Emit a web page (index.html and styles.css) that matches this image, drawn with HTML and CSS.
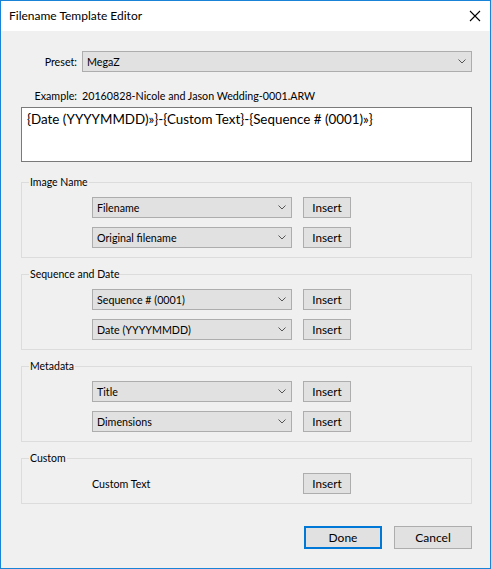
FILE: index.html
```html
<!DOCTYPE html>
<html lang="en">

<head>
    <meta charset="UTF-8">
    <title>Filename Template Editor</title>
    <link rel="stylesheet" href="styles.css">
</head>

<body>
    <div class="window">
        <div class="titlebar">
            <span class="title">Filename Template Editor</span>
            <svg class="close" width="12" height="12" viewBox="0 0 12 12">
                <path d="M1 1 L11 11 M11 1 L1 11" stroke="#000" stroke-width="1.1" fill="none" />
            </svg>
        </div>

        <div class="content">
            <div class="row preset-row">
                <span class="row-label">Preset:</span>
                <div class="combo wide">
                    <span>MegaZ</span>
                    <svg class="chev" width="8" height="5" viewBox="0 0 8 5"><path d="M0.5 0.5 L4 4 L7.5 0.5" stroke="#555" fill="none" /></svg>
                </div>
            </div>

            <div class="row example-row">
                <span class="row-label">Example:</span>
                <span>20160828-Nicole and Jason Wedding-0001.ARW</span>
            </div>

            <div class="template-box">{Date (YYYYMMDD)»}-{Custom Text}-{Sequence # (0001)»}</div>

            <fieldset class="group first">
                <legend>Image Name</legend>
                <div class="group-body">
                    <div class="token-row">
                        <div class="combo">
                            <span>Filename</span>
                            <svg class="chev" width="8" height="5" viewBox="0 0 8 5"><path d="M0.5 0.5 L4 4 L7.5 0.5" stroke="#555" fill="none" /></svg>
                        </div>
                        <button class="btn">Insert</button>
                    </div>
                    <div class="token-row">
                        <div class="combo">
                            <span>Original filename</span>
                            <svg class="chev" width="8" height="5" viewBox="0 0 8 5"><path d="M0.5 0.5 L4 4 L7.5 0.5" stroke="#555" fill="none" /></svg>
                        </div>
                        <button class="btn">Insert</button>
                    </div>
                </div>
            </fieldset>

            <fieldset class="group">
                <legend>Sequence and Date</legend>
                <div class="group-body">
                    <div class="token-row">
                        <div class="combo">
                            <span>Sequence # (0001)</span>
                            <svg class="chev" width="8" height="5" viewBox="0 0 8 5"><path d="M0.5 0.5 L4 4 L7.5 0.5" stroke="#555" fill="none" /></svg>
                        </div>
                        <button class="btn">Insert</button>
                    </div>
                    <div class="token-row">
                        <div class="combo">
                            <span>Date (YYYYMMDD)</span>
                            <svg class="chev" width="8" height="5" viewBox="0 0 8 5"><path d="M0.5 0.5 L4 4 L7.5 0.5" stroke="#555" fill="none" /></svg>
                        </div>
                        <button class="btn">Insert</button>
                    </div>
                </div>
            </fieldset>

            <fieldset class="group">
                <legend>Metadata</legend>
                <div class="group-body">
                    <div class="token-row">
                        <div class="combo">
                            <span>Title</span>
                            <svg class="chev" width="8" height="5" viewBox="0 0 8 5"><path d="M0.5 0.5 L4 4 L7.5 0.5" stroke="#555" fill="none" /></svg>
                        </div>
                        <button class="btn">Insert</button>
                    </div>
                    <div class="token-row">
                        <div class="combo">
                            <span>Dimensions</span>
                            <svg class="chev" width="8" height="5" viewBox="0 0 8 5"><path d="M0.5 0.5 L4 4 L7.5 0.5" stroke="#555" fill="none" /></svg>
                        </div>
                        <button class="btn">Insert</button>
                    </div>
                </div>
            </fieldset>

            <fieldset class="group">
                <legend>Custom</legend>
                <div class="group-body">
                    <div class="token-row">
                        <span class="plain-token">Custom Text</span>
                        <button class="btn">Insert</button>
                    </div>
                </div>
            </fieldset>

            <div class="actions">
                <button class="btn big default">Done</button>
                <button class="btn big">Cancel</button>
            </div>
        </div>
    </div>
</body>

</html>
```

FILE: styles.css
```css
* {
    box-sizing: border-box;
}

body {
    margin: 0;
    font-family: Lato, "Noto Sans", Arial, sans-serif;
    font-size: 10.7px;
    color: #000;
    background: #f0f0f0;
}

.window {
    width: 491px;
    height: 569px;
    border: 1px solid #1883d7;
    background: #f0f0f0;
}

.titlebar {
    height: 30px;
    background: white;
    display: flex;
    align-items: center;
    justify-content: space-between;
    padding: 0 9px 1px 8px;
}

.title {
    font-size: 12px;
}

.close {
    margin-top: 1px;
}

.content {
    padding: 20px 18px 0 20px;
}

.row {
    display: flex;
    align-items: center;
}

.row-label {
    width: 56px;
    margin-right: 5px;
    text-align: right;
}

.preset-row {
    height: 21px;
}

.example-row {
    margin-top: 14px;
    height: 18px;
}

.combo {
    display: flex;
    align-items: center;
    justify-content: space-between;
    width: 200px;
    height: 21px;
    padding: 0 5px 0 4px;
    background: #e1e1e1;
    border: 1px solid #adadad;
}

.combo.wide {
    flex: 1;
}

.template-box {
    margin-top: 3px;
    height: 55px;
    background: white;
    border: 1px solid #7a7a7a;
    padding: 3px 5px;
    font-size: 13.4px;
}

.group {
    margin: 10px 0 0 0;
    padding: 0;
    border: 1px solid #dcdcdc;
    min-width: 0;
}

.group.first {
    margin-top: 14px;
}

.group legend {
    margin-left: 7px;
    padding: 0 1px;
    font-size: 10.5px;
    line-height: 13px;
    height: 13px;
}

.group-body {
    padding: 8px 0 9px 70px;
}

.token-row {
    display: flex;
    align-items: center;
    gap: 11px;
    height: 21px;
}

.token-row + .token-row {
    margin-top: 9px;
}

.plain-token {
    width: 200px;
}

.btn {
    width: 48px;
    height: 21px;
    margin: 0;
    padding: 0;
    font-family: inherit;
    font-size: 11.7px;
    line-height: 1;
    color: #000;
    background: #e1e1e1;
    border: 1px solid #adadad;
    border-radius: 0;
}

.actions {
    display: flex;
    justify-content: flex-end;
    gap: 12px;
    margin-top: 22px;
}

.btn.big {
    width: 78px;
    height: 23px;
    font-size: 12px;
}

.btn.default {
    border: 2px solid #0078d7;
}
```
